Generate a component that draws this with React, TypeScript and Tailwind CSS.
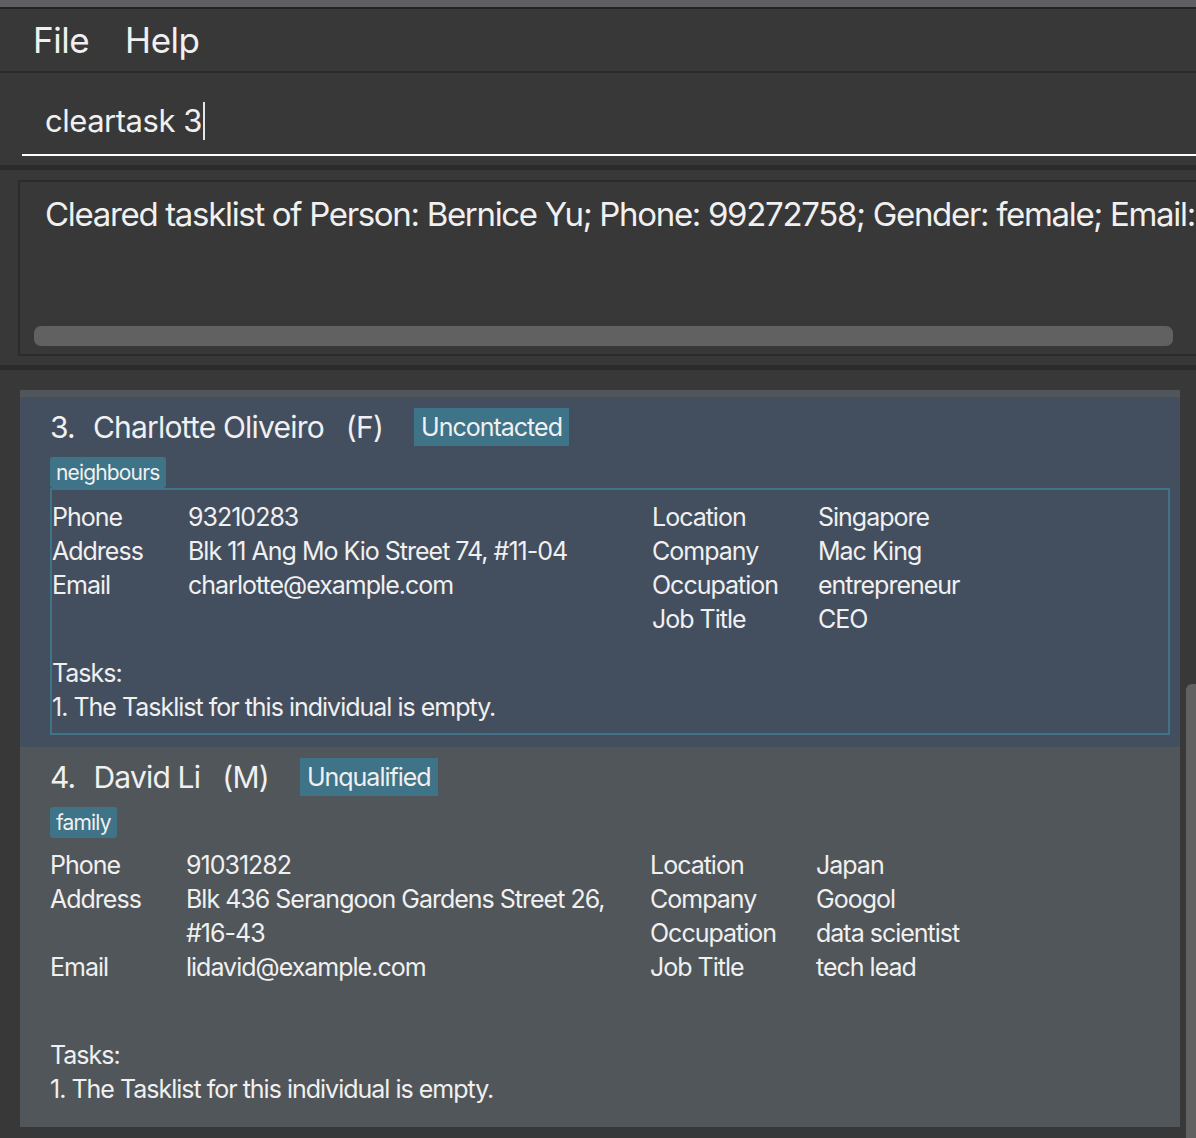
import React from 'react'

type Row = { label: string; value: string[] }

interface PersonCardProps {
  index: number
  name: string
  gender: string
  status: string
  tag: string
  left: Row[]
  right: Row[]
  selected?: boolean
  tasksGap: string
}

const FieldColumn = ({ rows, labelWidth, valueWidth }: { rows: Row[]; labelWidth: string; valueWidth: string }) => (
  <div className="flex flex-col">
    {rows.map((r) => (
      <div key={r.label} className="flex">
        <div className={`${labelWidth} shrink-0`}>{r.label}</div>
        <div className={`${valueWidth} flex flex-col`}>
          {r.value.map((v) => (
            <span key={v}>{v}</span>
          ))}
        </div>
      </div>
    ))}
  </div>
)

const PersonCard = ({ index, name, gender, status, tag, left, right, selected, tasksGap }: PersonCardProps) => {
  return (
    <div className={`${selected ? 'bg-[#434e5f]' : 'bg-[#51565a]'} pl-[30px] pr-[10px] pt-[11px] pb-[12px] text-[#f0f0f0]`}>
      {/* name row */}
      <div className="flex items-center h-[38px] tracking-[-0.05em]">
        <span className="text-[30px] leading-none">{index}.</span>
        <span className="text-[30px] leading-none ml-[18px]">{name}</span>
        <span className="text-[30px] leading-none ml-[22px]">({gender})</span>
        <span className="ml-[31px] h-[38px] px-[7px] flex items-center bg-[#3e7388] text-[25px] leading-none tracking-[-0.04em]">
          {status}
        </span>
      </div>
      <div className="flex mt-[11px]">
        <span className="h-[31px] px-[6px] flex items-center rounded-[3px] bg-[#3e7388] text-[21px] leading-none tracking-[-0.04em]">
          {tag}
        </span>
      </div>
      <div
        className={`${selected ? 'border-2 border-[#3e7388] pt-[10px]' : 'pt-[10px]'} pb-[9px] text-[25px] leading-[34px] tracking-[-0.04em]`}
      >
        <div className="flex">
          <FieldColumn rows={left} labelWidth="w-[136px]" valueWidth="w-[464px]" />
          <FieldColumn rows={right} labelWidth="w-[166px]" valueWidth="w-[300px]" />
        </div>
        <div className={tasksGap}>Tasks:</div>
        <div>1. The Tasklist for this individual is empty.</div>
      </div>
    </div>
  )
}

export default function App() {
  return (
    <div className="w-[1196px] h-[1138px] overflow-hidden bg-[#383838] flex flex-col font-['Inter',sans-serif] tracking-[-0.03em] text-[#f0f0f0]">
      {/* window top strip */}
      <div className="h-[9px] bg-[#5f5e63] border-b-2 border-[#222222] shrink-0" />

      {/* menu bar */}
      <div className="h-[64px] flex items-center pl-[33px] gap-[36px] text-[35px] border-b-2 border-[#2b2b2b] shrink-0">
        <span>File</span>
        <span>Help</span>
      </div>

      {/* command box */}
      <div className="h-[92px] pl-[22px] pt-[19px] shrink-0">
        <div className="h-[64px] border-b-2 border-white flex items-center pl-[23px] pb-[4px] text-[31px]">
          <span>cleartask 3</span>
          <span className="w-[2px] h-[38px] bg-[#e5e5e5] ml-[1px]" />
        </div>
      </div>

      <div className="h-[5px] bg-[#2b2b2b] shrink-0" />

      {/* result display */}
      <div className="h-[195px] pl-[18px] pt-[10px] shrink-0">
        <div className="h-[176px] border-2 border-r-0 border-[#2b2b2b] flex flex-col">
          <div className="pl-[25px] pt-[8px] text-[33px] tracking-[-0.04em] whitespace-nowrap overflow-hidden">
            Cleared tasklist of Person: Bernice Yu; Phone: 99272758; Gender: female; Email: berniceyu@example.com
          </div>
          <div className="mt-auto mb-[8px] ml-[14px] w-[1139px] h-[20px] rounded-[7px] bg-[#616161]" />
        </div>
      </div>

      <div className="h-[5px] bg-[#2b2b2b] shrink-0" />

      {/* person list */}
      <div className="flex-1 flex pt-[20px] pl-[20px] min-h-0">
        <div className="w-[1160px] flex flex-col">
          <div className="h-[7px] bg-[#51565a]" />
          <PersonCard
            index={3}
            name="Charlotte Oliveiro"
            gender="F"
            status="Uncontacted"
            tag="neighbours"
            selected
            tasksGap="mt-[20px]"
            left={[
              { label: 'Phone', value: ['93210283'] },
              { label: 'Address', value: ['Blk 11 Ang Mo Kio Street 74, #11-04'] },
              { label: 'Email', value: ['charlotte@example.com'] },
            ]}
            right={[
              { label: 'Location', value: ['Singapore'] },
              { label: 'Company', value: ['Mac King'] },
              { label: 'Occupation', value: ['entrepreneur'] },
              { label: 'Job Title', value: ['CEO'] },
            ]}
          />
          <PersonCard
            index={4}
            name="David Li"
            gender="M"
            status="Unqualified"
            tag="family"
            tasksGap="mt-[54px]"
            left={[
              { label: 'Phone', value: ['91031282'] },
              { label: 'Address', value: ['Blk 436 Serangoon Gardens Street 26,', '#16-43'] },
              { label: 'Email', value: ['lidavid@example.com'] },
            ]}
            right={[
              { label: 'Location', value: ['Japan'] },
              { label: 'Company', value: ['Googol'] },
              { label: 'Occupation', value: ['data scientist'] },
              { label: 'Job Title', value: ['tech lead'] },
            ]}
          />
        </div>
        <div className="ml-auto w-[10px] mt-[294px] rounded-tl-[6px] bg-[#616161]" />
      </div>
    </div>
  )
}
